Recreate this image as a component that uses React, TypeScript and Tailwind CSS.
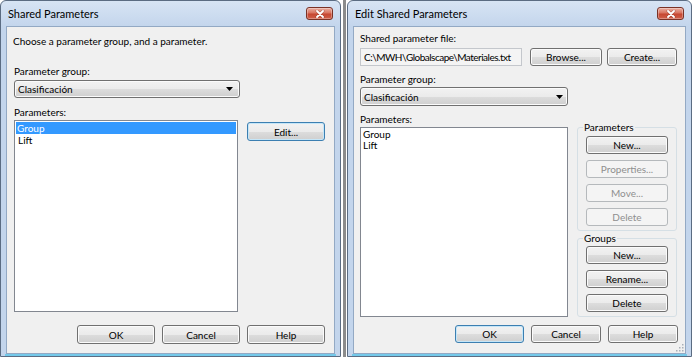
import type { ReactNode } from 'react';
import clsx from 'clsx';

const font = "font-['Lato','Liberation_Sans',sans-serif]";

function CloseButton() {
  return (
    <div className="w-[27px] h-[13px] rounded-[3px] border border-[#7a3226] bg-[linear-gradient(#eab0a2,#d9735f_45%,#c64630_55%,#d0604a)] flex items-center justify-center shadow-[inset_0_0_0_1px_rgba(255,255,255,0.3)]">
      <svg width="10" height="8" viewBox="0 0 10 8">
        <path d="M2 1 L8 7 M8 1 L2 7" stroke="#5a1a10" strokeWidth="3" strokeLinecap="round" opacity="0.35" />
        <path d="M2 1 L8 7 M8 1 L2 7" stroke="#fff" strokeWidth="1.8" strokeLinecap="round" />
      </svg>
    </div>
  );
}

function Window({ title, className, children }: { title: string; className: string; children: ReactNode }) {
  return (
    <div
      className={clsx(
        'flex flex-col rounded-t-[6px] border border-[#5b6c82] bg-[linear-gradient(#d7e4f4,#c3d5ec_26px,#c3d5ec)]',
        className,
      )}
    >
      <div className="h-[25px] flex items-start justify-between pl-[7px] pr-[7px] pt-[6px]">
        <span className="text-[11px] leading-[13px] text-black">{title}</span>
        <CloseButton />
      </div>
      <div className="relative flex-1 mx-[5px] border border-[#93a9c4] bg-[#f0f0f0]">{children}</div>
      <div className="h-[2px] mx-[4px] bg-[#74c9ea]" />
    </div>
  );
}

function Btn({
  label,
  className,
  primary,
  disabled,
}: {
  label: string;
  className: string;
  primary?: boolean;
  disabled?: boolean;
}) {
  return (
    <div
      className={clsx(
        'flex items-center justify-center rounded-[3px] border text-[10px] leading-none shrink-0',
        disabled
          ? 'border-[#b5b9bc] bg-[#f4f4f4] text-[#8f8f8f]'
          : primary
            ? 'border-[#3c7fb1] bg-[linear-gradient(#f2f2f2,#ebebeb_50%,#dddddd_50%,#cfcfcf)] shadow-[inset_0_0_0_1px_#c5e6f8] text-black'
            : 'border-[#707070] bg-[linear-gradient(#f2f2f2,#ebebeb_50%,#dddddd_50%,#cfcfcf)] shadow-[inset_0_0_0_1px_#fbfbfb] text-black',
        className,
      )}
    >
      {label}
    </div>
  );
}

function Combo({ className }: { className: string }) {
  return (
    <div
      className={clsx(
        'flex items-center justify-between rounded-[3px] border border-[#707070] bg-[linear-gradient(#f2f2f2,#ebebeb_50%,#dddddd_50%,#cfcfcf)] shadow-[inset_0_0_0_1px_#fbfbfb] pl-[3px] text-[10px] leading-none',
        className,
      )}
    >
      <span>Clasificación</span>
      <svg width="7" height="4" viewBox="0 0 7 4">
        <path d="M0 0 H7 L3.5 4 Z" fill="#000" />
      </svg>
    </div>
  );
}

function GroupBox({ title, className, children }: { title: string; className: string; children: ReactNode }) {
  return (
    <div className={clsx('relative border border-[#d5dfe5] rounded-[3px] px-[8px] flex flex-col gap-[6px]', className)}>
      <span className="absolute -top-[7px] left-[5px] px-[1px] bg-[#f0f0f0] text-[10px] leading-[13px]">{title}</span>
      {children}
    </div>
  );
}

function SharedParameters() {
  return (
    <Window title="Shared Parameters" className="w-[341px] h-[357px] shrink-0">
      <div className="flex flex-col pl-[6px] pt-[8px] text-[10px]">
        <p className="leading-[13px]">Choose a parameter group, and a parameter.</p>
        <p className="mt-[17px] leading-[13px] pl-[1px]">Parameter group:</p>
        <Combo className="mt-[2px] ml-[1px] w-[226px] h-[18px] pr-[6px]" />
        <div className="mt-[8px] flex">
          <div className="flex flex-col pl-[1px]">
            <p className="leading-[13px]">Parameters:</p>
            <div className="mt-[1px] w-[224px] h-[192px] border border-[#828790] bg-white p-[1px]">
              <div className="h-[12px] bg-[#3399ff] text-white leading-[12px] pl-[1px]">Group</div>
              <div className="h-[12px] leading-[12px] pl-[2px]">Lift</div>
            </div>
          </div>
          <Btn label="Edit..." primary className="ml-[9px] mt-[16px] w-[78px] h-[19px]" />
        </div>
        <div className="mt-[13px] flex justify-end gap-[7px] pr-[9px]">
          <Btn label="OK" className="w-[78px] h-[19px]" />
          <Btn label="Cancel" className="w-[78px] h-[19px]" />
          <Btn label="Help" className="w-[78px] h-[19px]" />
        </div>
      </div>
    </Window>
  );
}

function EditSharedParameters() {
  return (
    <Window title="Edit Shared Parameters" className="w-[345px] h-[357px] shrink-0">
      <div className="flex flex-col pl-[6px] pt-[5px] text-[10px]">
        <p className="leading-[13px]">Shared parameter file:</p>
        <div className="mt-[3px] flex">
          <div className="w-[162px] h-[18px] border border-[#c4c7cc] bg-[#f4f4f4] flex items-center pl-[3px] overflow-hidden whitespace-nowrap tracking-[-0.5px]">
            C:\MWH\Globalscape\Materiales.txt
          </div>
          <Btn label="Browse..." className="ml-[8px] w-[72px] h-[18px]" />
          <Btn label="Create..." className="ml-[5px] w-[70px] h-[18px]" />
        </div>
        <p className="mt-[7px] leading-[13px]">Parameter group:</p>
        <Combo className="mt-[1px] w-[208px] h-[19px] pr-[4px]" />
        <div className="mt-[7px] flex">
          <div className="flex flex-col">
            <p className="leading-[13px]">Parameters:</p>
            <div className="mt-[1px] w-[208px] h-[190px] border border-[#828790] bg-white pt-[1px] pl-[2px]">
              <div className="leading-[11px]">Group</div>
              <div className="leading-[11px]">Lift</div>
            </div>
          </div>
          <div className="ml-[9px] mt-[14px] flex flex-col w-[100px]">
            <GroupBox title="Parameters" className="pt-[8px] pb-[4px]">
              <Btn label="New..." className="w-[82px] h-[18px]" />
              <Btn label="Properties..." disabled className="w-[82px] h-[18px]" />
              <Btn label="Move..." disabled className="w-[82px] h-[18px]" />
              <Btn label="Delete" disabled className="w-[82px] h-[18px]" />
            </GroupBox>
            <GroupBox title="Groups" className="mt-[7px] pt-[7px] pb-[4px]">
              <Btn label="New..." className="w-[82px] h-[18px]" />
              <Btn label="Rename..." className="w-[82px] h-[18px]" />
              <Btn label="Delete" className="w-[82px] h-[18px]" />
            </GroupBox>
          </div>
        </div>
        <div className="mt-[8px] flex justify-end gap-[7px] pr-[7px]">
          <Btn label="OK" primary className="w-[69px] h-[18px]" />
          <Btn label="Cancel" className="w-[70px] h-[18px]" />
          <Btn label="Help" className="w-[70px] h-[18px]" />
        </div>
      </div>
      {/* size grip */}
      <svg className="absolute right-[1px] bottom-[1px]" width="8" height="8" viewBox="0 0 8 8">
        {[
          [6, 0],
          [6, 3],
          [3, 3],
          [6, 6],
          [3, 6],
          [0, 6],
        ].map(([x, y]) => (
          <rect key={`${x}-${y}`} x={x} y={y} width="1.5" height="1.5" fill="#a9b0b8" />
        ))}
      </svg>
    </Window>
  );
}

export default function App() {
  return (
    <div className={clsx('w-[693px] h-[357px] bg-white flex overflow-hidden text-black', font)}>
      <SharedParameters />
      <div className="w-[2px] shrink-0" />
      <div className="w-[3px] shrink-0 bg-[#8c8c8c]" />
      <div className="w-[1px] shrink-0" />
      <EditSharedParameters />
    </div>
  );
}
